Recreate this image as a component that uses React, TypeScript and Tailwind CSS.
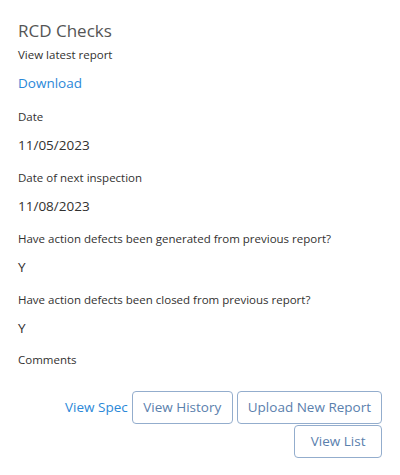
const fields = [
  { label: "Date", value: "11/05/2023" },
  { label: "Date of next inspection", value: "11/08/2023" },
  { label: "Have action defects been generated from previous report?", value: "Y" },
  { label: "Have action defects been closed from previous report?", value: "Y" },
];

export default function App() {
  return (
    <div className="h-[475px] w-[400px] bg-white font-['Open_Sans',sans-serif] text-[#323130]">
      <div className="px-[18px] pt-[19px]">
        <h2 className="text-[17px] leading-[24px] text-[#555]">RCD Checks</h2>
        <p className="mt-[4px] text-[11.5px] leading-[16px]">View latest report</p>
        <a href="#" className="mt-[11px] block text-[13.5px] leading-[18px] text-[#2b88d8]">
          Download
        </a>

        {fields.map((field, i) => (
          <div key={field.label} className={i === 0 ? "mt-[17px]" : "mt-[16px]"}>
            <p className="text-[11.5px] leading-[16px]">{field.label}</p>
            <p className="mt-[11px] text-[13.5px] leading-[18px]">{field.value}</p>
          </div>
        ))}

        <p className="mt-[15px] text-[11.5px] leading-[16px]">Comments</p>
      </div>

      <div className="mt-[23px] flex flex-wrap items-center justify-end gap-x-[4px] gap-y-[1px] pr-[18px] pl-[18px]">
        <a href="#" className="text-[13.5px] text-[#2b88d8]">View Spec</a>
        <button className="h-[33px] rounded-[4px] border border-[#93adcd] px-[10.5px] text-[13.5px] text-[#5a80ad]">
          View History
        </button>
        <button className="h-[33px] rounded-[4px] border border-[#93adcd] px-[10px] text-[13.5px] text-[#5a80ad]">
          Upload New Report
        </button>
        <button className="h-[33px] rounded-[4px] border border-[#93adcd] px-[15.5px] text-[13.5px] text-[#5a80ad]">
          View List
        </button>
      </div>
    </div>
  );
}
